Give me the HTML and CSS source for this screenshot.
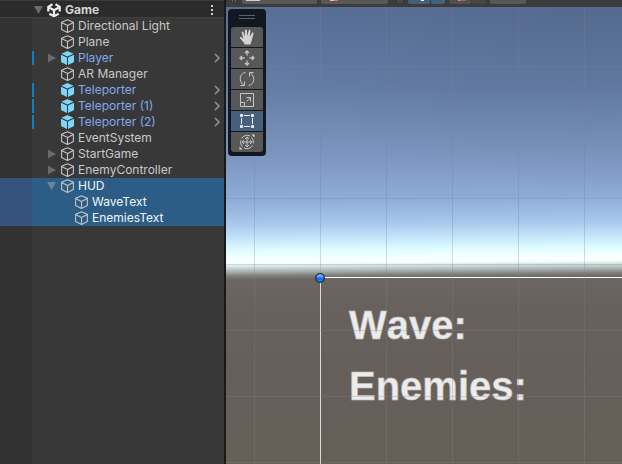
FILE: index.html
```html
<!DOCTYPE html>
<html lang="en">
<head>
<meta charset="utf-8">
<title>Game</title>
<link rel="stylesheet" href="styles.css">
</head>
<body>
<svg class="defs" aria-hidden="true">
  <symbol id="cube" viewBox="0 0 14 14"><path d="M7 .7 12.9 3.3V10.4L7 13.4 1.1 10.4V3.3ZM1.1 3.4 7 6.4 12.9 3.4M7 6.4V13.3" fill="none" stroke="currentColor" stroke-width="1.1" stroke-linejoin="round"/></symbol>
  <symbol id="prefab" viewBox="0 0 14 14"><path d="M7 0 13 2.7 7 5.6 1 2.7ZM.5 3.7 6.5 6.6V14L.5 11ZM13.5 3.7 7.5 6.6V14L13.5 11Z" fill="#7fd6fd"/></symbol>
  <symbol id="down" viewBox="0 0 10 10"><path d="M0 1H9L4.500 9Z" fill="currentColor"/></symbol>
  <symbol id="right" viewBox="0 0 10 10"><path d="M1 .5V9.500L9 5Z" fill="currentColor"/></symbol>
  <symbol id="chevron" viewBox="0 0 8 10"><path d="M2 1 6 5 2 9" fill="none" stroke="currentColor" stroke-width="1.500"/></symbol>
</svg>
<main class="editor">
  <section class="hierarchy" aria-label="Hierarchy">
    <header class="scene-head">
      <svg class="fold"><use href="#down"/></svg>
      <svg class="logo" viewBox="0 0 14 14"><path d="M5.500 1.300 1.300 3.800V8.500M8.500 1.300 12.700 3.800V8.500M2.300 10.700 7 13.200 11.700 10.700M7 7.300V12.500M7 7.300 2.500 4.600M7 7.300 11.500 4.600" fill="none" stroke="#eee" stroke-width="2.200"/></svg>
      <h1>Game</h1>
      <button class="more" aria-label="Scene options"><svg viewBox="0 0 4 12"><path d="M1 1H3V3H1ZM1 5H3V7H1ZM1 9H3V11H1Z" fill="#d0d0d0"/></svg></button>
    </header>
    <ul class="tree">
      <li class="row"><span class="fold"></span><svg class="icon"><use href="#cube"/></svg><span>Directional Light</span></li>
      <li class="row"><span class="fold"></span><svg class="icon"><use href="#cube"/></svg><span>Plane</span></li>
      <li class="row linked"><svg class="fold"><use href="#right"/></svg><svg class="icon"><use href="#prefab"/></svg><span>Player</span><button class="open" aria-label="Open Player"><svg><use href="#chevron"/></svg></button></li>
      <li class="row"><span class="fold"></span><svg class="icon"><use href="#cube"/></svg><span>AR Manager</span></li>
      <li class="row linked"><span class="fold"></span><svg class="icon"><use href="#prefab"/></svg><span>Teleporter</span><button class="open" aria-label="Open Teleporter"><svg><use href="#chevron"/></svg></button></li>
      <li class="row linked"><span class="fold"></span><svg class="icon"><use href="#prefab"/></svg><span>Teleporter (1)</span><button class="open" aria-label="Open Teleporter (1)"><svg><use href="#chevron"/></svg></button></li>
      <li class="row linked"><span class="fold"></span><svg class="icon"><use href="#prefab"/></svg><span>Teleporter (2)</span><button class="open" aria-label="Open Teleporter (2)"><svg><use href="#chevron"/></svg></button></li>
      <li class="row"><span class="fold"></span><svg class="icon"><use href="#cube"/></svg><span>EventSystem</span></li>
      <li class="row"><svg class="fold"><use href="#right"/></svg><svg class="icon"><use href="#cube"/></svg><span>StartGame</span></li>
      <li class="row"><svg class="fold"><use href="#right"/></svg><svg class="icon"><use href="#cube"/></svg><span>EnemyController</span></li>
      <li class="row selected"><svg class="fold"><use href="#down"/></svg><svg class="icon"><use href="#cube"/></svg><span>HUD</span></li>
      <li class="row selected child"><span class="fold"></span><svg class="icon"><use href="#cube"/></svg><span>WaveText</span></li>
      <li class="row selected child"><span class="fold"></span><svg class="icon"><use href="#cube"/></svg><span>EnemiesText</span></li>
    </ul>
  </section>
  <section class="view" aria-label="Scene">
    <div class="strip">
      <span class="grip"></span>
      <button class="chip wide" aria-label="Pivot"><i class="mark"></i></button>
      <button class="chip medium" aria-label="Orientation"><i class="mark warm"></i></button>
      <span class="grip"></span>
      <div class="pair active"><button class="chip" aria-label="Grid"><i class="dot"></i></button><button class="chip slim" aria-label="Grid options"></button></div>
      <div class="pair dim"><button class="chip" aria-label="Snap"><i class="mark faded"></i></button><button class="chip slim" aria-label="Snap options"></button></div>
      <button class="chip short" aria-label="Increment"></button>
    </div>
    <div class="scene">
      <div class="canvas-frame">
        <p>Wave:</p>
        <p>Enemies:</p>
        <svg class="handle" viewBox="0 0 12 12"><defs><linearGradient id="knob" x2="0" y2="1"><stop offset="0" stop-color="#9bc2f5"/><stop offset=".42" stop-color="#4995f5"/><stop offset=".5" stop-color="#0967e9"/><stop offset="1" stop-color="#268cf8"/></linearGradient></defs><circle cx="6" cy="6" r="4.400" fill="url(#knob)" stroke="#252c38" stroke-width="1.200"/></svg>
      </div>
      <div class="tools" role="toolbar" aria-label="Tools">
        <span class="drag"></span>
        <button aria-label="View"><svg viewBox="0 0 16 16"><path d="M5.800 15.500 4.300 13 1 9.200C.4 8.300 1.500 7.500 2.500 8.200L4.400 9.800 2.700 3.500C2.500 2.300 3.900 2 4.300 3.100L5.900 7.200 5.900 1.300C6 .2 7.600.2 7.800 1.300L8.400 7 9.700 1.500C10 .5 11.500.7 11.400 1.900L10.800 7.500 13 4C13.600 3.100 14.900 3.700 14.500 4.700L12.600 12 11.400 15.500Z" fill="#d2d2d2" stroke="none"/></svg></button>
        <button aria-label="Move"><svg viewBox="0 0 16 16"><path d="M8 1V5.500M8 10.500V15M1 8H5.500M10.500 8H15M6 3 8 1 10 3M6 13 8 15 10 13M3 6 1 8 3 10M13 6 15 8 13 10" stroke-width="1.300"/></svg></button>
        <button aria-label="Rotate"><svg viewBox="0 0 16 16"><path d="M6.500 1.500C.2 2.500-.6 10.500 5 14.500M1.500 14.500H5.500V10.500M9.500 14.500C15.800 13.500 16.600 5.500 11 1.500M14.500 1.500H10.500V5.500"/></svg></button>
        <button aria-label="Scale"><svg viewBox="0 0 16 16"><path d="M1.500 1.500H14.500V14.500H1.500ZM1.500 10.500H5.500V14.500M7.500 9.500 11.500 5.500M7.500 5.500H11.500V9.500"/></svg></button>
        <button class="on" aria-label="Rect"><svg viewBox="0 0 16 16"><path d="M5 2.500H11M5 13.500H11M2.500 5V11M13.500 5V11"/><path class="solid" d="M1 1H4V4H1ZM12 1H15V4H12ZM1 12H4V15H1ZM12 12H15V15H12Z"/></svg></button>
        <button aria-label="Transform"><svg viewBox="0 0 16 16"><path d="M3.500 12.700A6.500 6.500 0 0 1 1.700 6.500M2.500 4.500A6.500 6.500 0 0 1 11 2M12.500 3.300A6.500 6.500 0 0 1 14.300 9.500M13.500 11.500A6.500 6.500 0 0 1 5 14M8 3V13M3 8H13M6 5 8 3 10 5M6 11 8 13 10 11M5 6 3 8 5 10M11 6 13 8 11 10"/><path class="solid" d="M12.500 .5H15.500V3.500ZM.5 12.500V15.500H3.500Z"/></svg></button>
      </div>
    </div>
  </section>
</main>
</body>
</html>
```

FILE: styles.css
```css
* { box-sizing: border-box; }
body {
  margin: 0;
  background: #383838;
  color: #c8c8c8;
  font: 12px/16px Inter, "Liberation Sans", sans-serif;
}
.defs { position: absolute; width: 0; height: 0; }
svg { display: block; flex: none; }
button { border: 0; padding: 0; background: none; color: inherit; font: inherit; }

.editor {
  display: grid;
  grid-template-columns: 226px 1fr;
  min-height: 100vh;
}

.hierarchy {
  display: flex;
  flex-direction: column;
  border-right: 2px solid #191919;
}
.scene-head {
  display: flex;
  align-items: center;
  height: 18px;
  padding: 2px 10px 0 34px;
  background: #2b2b2b;
  border-top: 1px solid #3a3a3a;
  border-bottom: 1px solid #404040;
}
.fold { width: 10px; height: 10px; margin-right: 3px; color: #6a6a6a; }
.logo { width: 14px; height: 14px; margin-right: 4px; }
h1 { margin: 0; color: #d6d6d6; font-size: 12px; line-height: 16px; font-weight: 700; }
.more { margin-left: auto; }
.more svg { width: 4px; height: 12px; }

.tree {
  flex: 1;
  margin: 0;
  padding: 0;
  list-style: none;
  background: linear-gradient(90deg, #323232 32px, #383838 32px);
}
.row {
  display: flex;
  align-items: center;
  height: 16px;
  padding: 0 3px 0 47px;
  white-space: nowrap;
}
.icon { width: 15px; height: 14px; margin-right: 3px; color: #c4c4c4; }
.linked {
  color: #7fa8ee;
  background: linear-gradient(#0f7fbf, #0f7fbf) 32px 1px / 2px 14px no-repeat;
}
.open { margin-left: auto; color: #959595; }
.open svg { width: 8px; height: 10px; }
.selected {
  color: #f2f5f8;
  background: linear-gradient(90deg, #35527c 32px, #2c5d87 32px);
}
.selected .fold { color: #6c8598; }
.child { padding-left: 61px; }

.view { display: flex; flex-direction: column; min-width: 0; }
.strip {
  display: flex;
  align-items: flex-start;
  gap: 4px;
  height: 7px;
  padding-left: 6px;
  overflow: hidden;
  background: #3c3c3c;
}
.grip {
  width: 6px;
  height: 2px;
  background: linear-gradient(90deg, #606060 1px, transparent 1px 3px, #606060 3px 4px, transparent 4px);
}
.chip {
  display: block;
  width: 22px;
  height: 4px;
  background: #585858;
  border-radius: 0 0 2px 2px;
}
.wide { width: 75px; }
.medium { width: 67px; margin-right: 6px; }
.short { width: 36px; }
.slim { width: 14px; }
.pair { display: flex; gap: 1px; }
.active .chip { background: #46607c; }
.dim .chip { background: #505050; }
.dim .slim { background: #464646; }
.mark { display: block; width: 14px; height: 1px; margin: 0 0 3px 4px; background: #d0d0d0; }
.warm { width: 8px; margin-left: 9px; background: linear-gradient(90deg, #ccc 50%, #f07048 50%); }
.faded { width: 8px; margin-left: 9px; background: linear-gradient(90deg, #aaa 25%, #b06048 25%); }
.dot { display: block; width: 3px; height: 1px; margin: 0 0 3px 13px; background: #fff; }

.scene {
  position: relative;
  flex: 1;
  padding: 270px 0 0 94px;
  display: flex;
  background:
    radial-gradient(ellipse 380px 190px at 100% 0, rgba(70, 85, 105, .22), transparent),
    linear-gradient(179.500deg, #586e97 0, #647da7 80px, #7b96c0 150px, #8facd8 193px, #a8c9ed 218px, #c9e9fc 234px, #e0feff 244px, #fbffff 254px, #f4fffd 257px, #d3e2df 260px, #a6b0ad 265px, #807f7d 269px, #6b6664 273px, #67605b 310px, #665f58 100%);
}
.scene::after {
  content: "";
  position: absolute;
  inset: 0;
  pointer-events: none;
  background:
    repeating-linear-gradient(90deg, rgba(125, 130, 140, .3) 0 1px, transparent 1px 66px) 28px 0,
    repeating-linear-gradient(rgba(125, 130, 140, .3) 0 1px, transparent 1px 66px) 0 59px;
  background-size: 660px 100%, 100% 660px;
}
.canvas-frame {
  position: relative;
  flex: 1;
  padding: 17px 0 0 28px;
  border: solid #fff;
  border-width: 1px 0 0 1px;
}
.canvas-frame p {
  margin: 0;
  color: #ececec;
  font: 700 40px/61px "Liberation Sans", Arial, sans-serif;
  font-kerning: none;
  -webkit-text-stroke: 1px rgba(190, 190, 190, .6);
}
.handle { position: absolute; left: -7px; top: -6px; width: 12px; height: 12px; z-index: 1; }

.tools {
  position: absolute;
  left: 2px;
  top: 2px;
  z-index: 1;
  display: flex;
  flex-direction: column;
  gap: 1px;
  padding: 6px 3px 4px;
  background: #111820;
  border-radius: 4px;
}
.drag {
  align-self: center;
  width: 16px;
  height: 4px;
  margin-bottom: 7px;
  border: solid #5c6168;
  border-width: 1px 0;
}
.tools button {
  display: grid;
  place-items: center;
  width: 32px;
  height: 20px;
  background: #585858;
}
.tools button:nth-of-type(1) { border-radius: 3px 3px 0 0; }
.tools button:last-child { border-radius: 0 0 3px 3px; }
.tools .on { background: #46607c; }
.tools svg { width: 16px; height: 16px; fill: none; stroke: #c4c4c4; }
.tools .on svg { stroke: #eee; }
.tools .solid { fill: #ddd; stroke: none; }
```
